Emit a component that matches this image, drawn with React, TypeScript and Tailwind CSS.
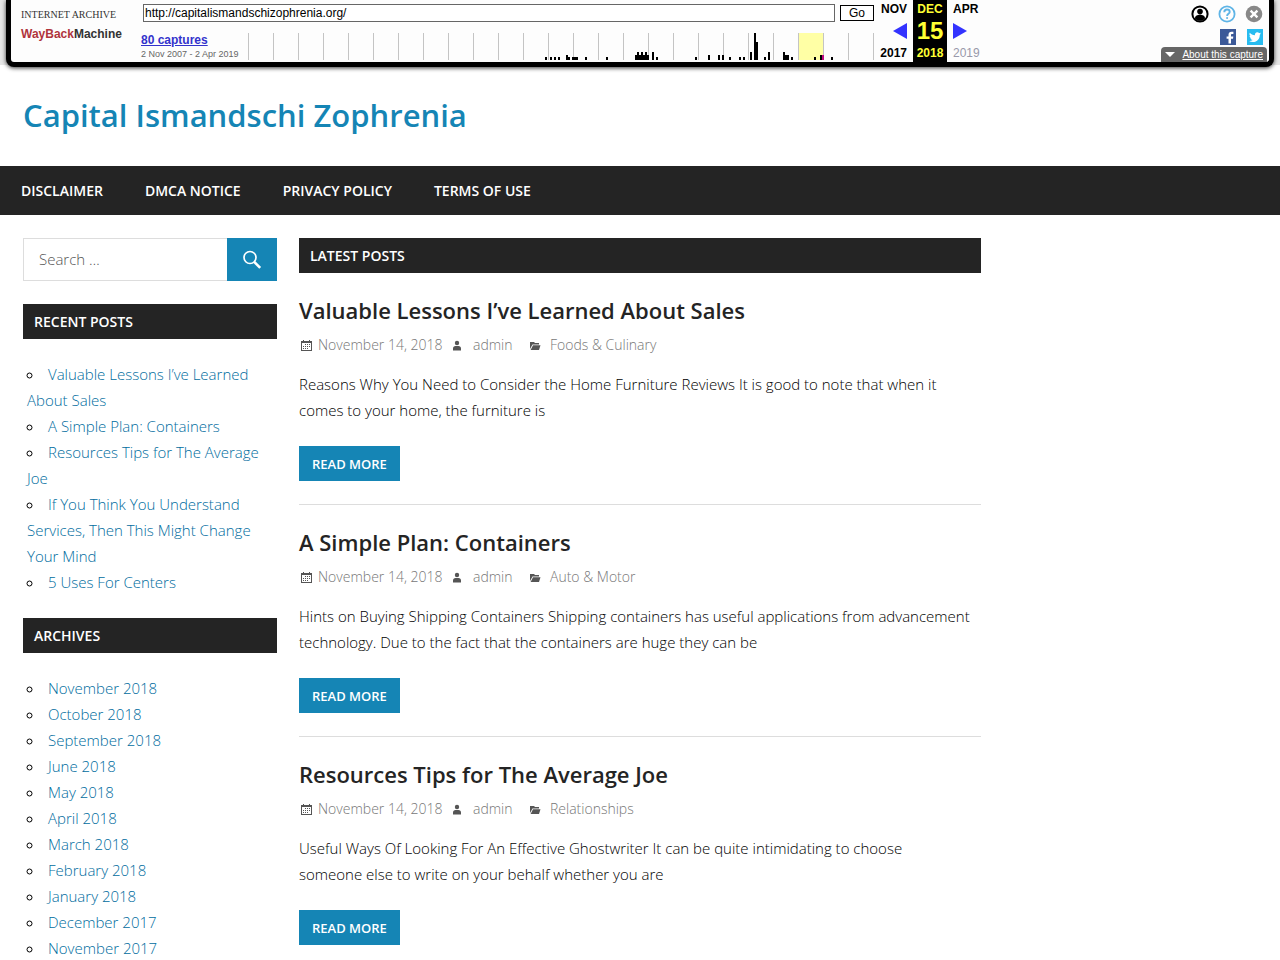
import { useState } from "react";

const navLinks = ["Disclaimer", "DMCA Notice", "Privacy Policy", "Terms of Use"];

const recentPosts = [
  "Valuable Lessons I’ve Learned About Sales",
  "A Simple Plan: Containers",
  "Resources Tips for The Average Joe",
  "If You Think You Understand Services, Then This Might Change Your Mind",
  "5 Uses For Centers",
];

const archives = [
  "November 2018",
  "October 2018",
  "September 2018",
  "June 2018",
  "May 2018",
  "April 2018",
  "March 2018",
  "February 2018",
  "January 2018",
  "December 2017",
  "November 2017",
];

const posts = [
  {
    title: "Valuable Lessons I’ve Learned About Sales",
    category: "Foods & Culinary",
    excerpt:
      "Reasons Why You Need to Consider the Home Furniture Reviews It is good to note that when it comes to your home, the furniture is",
  },
  {
    title: "A Simple Plan: Containers",
    category: "Auto & Motor",
    excerpt:
      "Hints on Buying Shipping Containers Shipping containers has useful applications from advancement technology. Due to the fact that the containers are huge they can be",
  },
  {
    title: "Resources Tips for The Average Joe",
    category: "Relationships",
    excerpt:
      "Useful Ways Of Looking For An Effective Ghostwriter It can be quite intimidating to choose someone\u00a0else to write on your behalf whether you are",
  },
];

// [x, height] of each capture bar
const captureBars = [
  [297, 3], [302, 3], [306, 3], [310, 3], [318, 5], [320, 3], [324, 3], [326, 3],
  [328, 3], [337, 3], [358, 3], [387, 5], [389, 8], [391, 5], [393, 8], [395, 5],
  [397, 8], [399, 5], [404, 8], [408, 3], [447, 3], [460, 5], [470, 5], [474, 5],
  [481, 3], [491, 3], [495, 3], [502, 8], [506, 27], [508, 18], [516, 3], [520, 8],
  [535, 8], [537, 5], [539, 5], [543, 3], [566, 3], [572, 5], [583, 3],
];

function Sparkline() {
  return (
    <svg width="626" height="27" viewBox="0 0 626 27" shapeRendering="crispEdges" aria-hidden="true">
      <rect x="551" y="0" width="24" height="27" fill="#ffffa5" />
      {Array.from({ length: 26 }, (_, i) => (
        <rect key={i} x={i * 25} y="0" width="1" height="27" fill="#c4c4c4" />
      ))}
      {captureBars.map(([x, h]) => (
        <rect key={x} x={x} y={27 - h} width="2" height={h} fill="#000" />
      ))}
      <rect x="574" y="22" width="2" height="5" fill="#c0087f" />
    </svg>
  );
}

function MonthColumn({ month, year, children, className }: any) {
  return (
    <div className={`flex flex-col justify-between py-px text-xs leading-4 font-bold ${className}`}>
      <span>{month}</span>
      {children}
      <span>{year}</span>
    </div>
  );
}

function ArchiveBar() {
  const [url, setUrl] = useState("http://capitalismandschizophrenia.org/");
  return (
    <div className="h-[65px] bg-[#e6e6e6] px-1.5 font-['Liberation_Sans',Arial,sans-serif] font-normal text-black">
      <div className="flex h-[67px] rounded-b-lg border-x-5 border-b-5 border-black bg-[#fdfdfd] pl-2.5 shadow-[0_1px_4px_#333]">
        <a href="#" className="flex w-[120px] flex-col pt-2.5 whitespace-nowrap">
          <span className="font-['Liberation_Serif',serif] text-[10px] leading-[10px] text-[#333]">
            INTERNET ARCHIVE
          </span>
          <span className="text-xs leading-7 font-bold">
            <span className="text-[#b0343c]">WayBack</span>
            <span className="text-[#333]">Machine</span>
          </span>
        </a>

        <div className="flex flex-col">
          <form className="flex gap-[5px] pt-1 pl-0.5" onSubmit={(e) => e.preventDefault()}>
            <input
              type="text"
              aria-label="URL"
              value={url}
              onChange={(e) => setUrl(e.target.value)}
              className="h-[18px] min-w-0 flex-1 border border-[#666] bg-white px-px text-xs leading-4"
            />
            <button type="submit" className="h-4 w-[34px] self-center border border-black bg-white text-xs leading-3">
              Go
            </button>
          </form>
          <div className="mt-[11px] flex">
            <div className="w-[107px]">
              <a href="#" className="block text-xs leading-[14px] font-bold text-[#33c] underline">
                80 captures
              </a>
              <p className="text-[9px] leading-[14px] whitespace-nowrap text-[#666]">2 Nov 2007 - 2 Apr 2019</p>
            </div>
            <Sparkline />
          </div>
        </div>

        <div className="grid grid-cols-[39px_34px_39px]">
          <MonthColumn month="NOV" year="2017" className="items-end pr-1.5">
            <a href="#" aria-label="Previous capture">
              <svg width="14" height="16" viewBox="0 0 14 16">
                <path d="M14 0v16L0 8z" fill="#33f" />
              </svg>
            </a>
          </MonthColumn>
          <MonthColumn month="DEC" year="2018" className="items-center bg-black text-[#ff3]">
            <span className="text-2xl leading-6">15</span>
          </MonthColumn>
          <MonthColumn month="APR" year={<span className="font-normal text-[#99a]">2019</span>} className="items-start pl-1.5">
            <a href="#" aria-label="Next capture">
              <svg width="14" height="16" viewBox="0 0 14 16">
                <path d="M0 0v16l14-8z" fill="#33f" />
              </svg>
            </a>
          </MonthColumn>
        </div>

        <div className="ml-auto flex flex-col items-end justify-between pt-[5px] pr-0.5">
          <div className="grid grid-cols-[18px_18px_18px] justify-items-end gap-x-[9px] gap-y-1.5 pr-1">
            <button aria-label="Sign in">
              <svg width="18" height="18" viewBox="0 0 18 18">
                <circle cx="9" cy="9" r="7.6" fill="#fff" stroke="#000" strokeWidth="2" />
                <circle cx="9" cy="6.6" r="2.8" />
                <path d="M3.8 13.2c.6-2.4 2.4-3.4 5.2-3.4s4.6 1 5.2 3.4C12.8 15 11 15.8 9 15.8S5.2 15 3.8 13.2z" />
              </svg>
            </button>
            <button aria-label="Help">
              <svg width="18" height="18" viewBox="0 0 18 18" fill="none" stroke="#5eb4e6">
                <circle cx="9" cy="9" r="7.6" strokeWidth="1.8" />
                <path d="M6.3 7.2c0-1.7 1.1-2.7 2.7-2.7s2.7 1 2.7 2.4c0 1.9-2.6 2-2.6 4" strokeWidth="1.9" />
                <circle cx="9.1" cy="13" r=".6" fill="#5eb4e6" />
              </svg>
            </button>
            <button aria-label="Close">
              <svg width="18" height="18" viewBox="0 0 18 18">
                <circle cx="9" cy="9" r="8.3" fill="#888" />
                <path d="M5.6 5.6l6.8 6.8M12.4 5.6l-6.8 6.8" stroke="#fff" strokeWidth="2.4" />
              </svg>
            </button>
            <a href="#" aria-label="Share on Facebook" className="col-start-2">
              <svg width="16" height="16" viewBox="0 0 16 16">
                <path d="M0 0h16v16H0z" fill="#3b5998" />
                <path
                  d="M8.5 14.5V9.8H6.6V7.4h1.9V5.7c0-2 1.2-3 3-3l1.9.1v2.1h-1.3c-.9 0-1.1.4-1.1 1.1v1.4h2.3l-.3 2.4h-2v4.7z"
                  fill="#fff"
                />
              </svg>
            </a>
            <a href="#" aria-label="Share on Twitter">
              <svg width="16" height="16" viewBox="0 0 16 16">
                <path d="M0 0h16v16H0z" fill="#28bcf0" />
                <path
                  d="M14 4.3c-.4.2-.9.3-1.4.4.5-.3.9-.8 1.1-1.3-.5.3-1 .5-1.6.6a2.5 2.5 0 0 0-4.2 2.3C5.8 6.2 4 5.2 2.8 3.7c-.7 1.1-.3 2.6.8 3.3-.4 0-.8-.1-1.1-.3 0 1.2.8 2.2 2 2.5-.4.1-.8.1-1.1 0 .3 1 1.2 1.7 2.3 1.7A5 5 0 0 1 2 12c1.1.7 2.4 1.1 3.8 1.1 4.6 0 7.1-3.9 7-7.4.5-.4.9-.8 1.2-1.4z"
                  fill="#fff"
                />
              </svg>
            </a>
          </div>
          <a
            href="#"
            className="flex h-[15px] w-[106px] items-center justify-between rounded-t bg-[#666] px-1 text-[10px] leading-[15px] text-white"
          >
            <svg width="10" height="5" viewBox="0 0 10 5">
              <path d="M0 0h10L5 5z" fill="#fff" />
            </svg>
            <span className="underline">About this capture</span>
          </a>
        </div>
      </div>
    </div>
  );
}

function WidgetTitle({ children }: { children: string }) {
  return (
    <h3 className="bg-[#242424] px-[11px] text-sm leading-[35px] font-semibold text-white uppercase">{children}</h3>
  );
}

function LinkList({ items }: { items: string[] }) {
  return (
    <ul className="mt-[22px] ml-1 list-inside list-[circle] leading-[26px]">
      {items.map((item) => (
        <li key={item}>
          <a href="#" className="text-[#006c9e]">
            {item}
          </a>
        </li>
      ))}
    </ul>
  );
}

function PostMeta({ category }: { category: string }) {
  return (
    <div className="mt-2.5 grid grid-cols-[150px_78px_auto] text-sm leading-5 text-[#777]">
      <span className="flex items-center gap-[3px]">
        <svg width="16" height="16" viewBox="0 -1 16 16" fill="#555" shapeRendering="crispEdges">
          <path d="M2 3h2V2h1v1h5V2h1v1h2v10H2zM3 5v7h9V5z" fillRule="evenodd" />
          <path d="M6 6h1v1H6zM8 6h1v1H8zM10 6h1v1h-1zM4 8h1v1H4zM6 8h1v1H6zM8 8h1v1H8zM10 8h1v1h-1zM4 10h1v1H4zM6 10h1v1H6zM8 10h1v1H8z" />
        </svg>
        <a href="#">November 14, 2018</a>
      </span>
      <span className="flex items-center gap-2">
        <svg width="16" height="16" viewBox="0 -1 16 16" fill="#555">
          <circle cx="8" cy="5" r="2.2" />
          <path d="M4 12.5v-2C4 9 5 8 6.5 8h3C11 8 12 9 12 10.5v2z" />
        </svg>
        <a href="#">admin</a>
      </span>
      <span className="flex items-center gap-[7px]">
        <svg width="16" height="16" viewBox="0 -1 16 16" fill="#555">
          <path d="M3 4h4l1 1h4v1.5H5.5L3 11z" />
          <path d="M6 7.3h7.5L12 12H3.6z" />
        </svg>
        <a href="#">{category}</a>
      </span>
    </div>
  );
}

export default function App() {
  return (
    <div className="bg-white font-['Open_Sans','Noto_Sans',sans-serif] text-[15px] font-light text-black">
      <ArchiveBar />

      <header className="px-[23px] py-7">
        <h1 className="text-[31px] leading-[45px] font-semibold text-[#1585b5]">
          <a href="#">Capital Ismandschi Zophrenia</a>
        </h1>
      </header>

      <nav className="flex bg-[#242424]">
        {navLinks.map((link) => (
          <a key={link} href="#" className="px-[21px] text-sm leading-[49px] font-semibold text-white uppercase">
            {link}
          </a>
        ))}
      </nav>

      <div className="grid grid-cols-[254px_minmax(0,1fr)_254px] gap-[22px] px-[23px] pt-[23px]">
        <aside>
          <form className="mb-[23px] flex h-[43px]" onSubmit={(e) => e.preventDefault()}>
            <input
              type="search"
              aria-label="Search"
              placeholder="Search …"
              className="min-w-0 flex-1 border border-r-0 border-[#ddd] px-[15px] placeholder:text-[#555]"
            />
            <button type="submit" aria-label="Search" className="flex w-[50px] items-center justify-center bg-[#1585b5]">
              <svg width="20" height="20" viewBox="0 0 20 20" fill="none" stroke="#fff">
                <circle cx="8" cy="7.5" r="6" strokeWidth="1.7" />
                <path d="M12.2 11.8l6 6" strokeWidth="2.6" />
              </svg>
            </button>
          </form>

          <section className="mb-[23px]">
            <WidgetTitle>Recent Posts</WidgetTitle>
            <LinkList items={recentPosts} />
          </section>
          <section>
            <WidgetTitle>Archives</WidgetTitle>
            <LinkList items={archives} />
          </section>
        </aside>

        <main>
          <WidgetTitle>Latest Posts</WidgetTitle>
          {posts.map((post) => (
            <article key={post.title} className="border-b border-[#ddd] pt-[22px] pb-[23px]">
              <h2 className="text-[22px] leading-[30px] font-semibold text-[#242424]">
                <a href="#">{post.title}</a>
              </h2>
              <PostMeta category={post.category} />
              <p className="mt-4 mb-[23px] leading-[26px]">{post.excerpt}</p>
              <a
                href="#"
                className="block w-fit bg-[#1585b5] px-[13px] pt-px text-[13px] leading-[34px] font-semibold text-white uppercase"
              >
                Read more
              </a>
            </article>
          ))}
        </main>
      </div>
    </div>
  );
}
